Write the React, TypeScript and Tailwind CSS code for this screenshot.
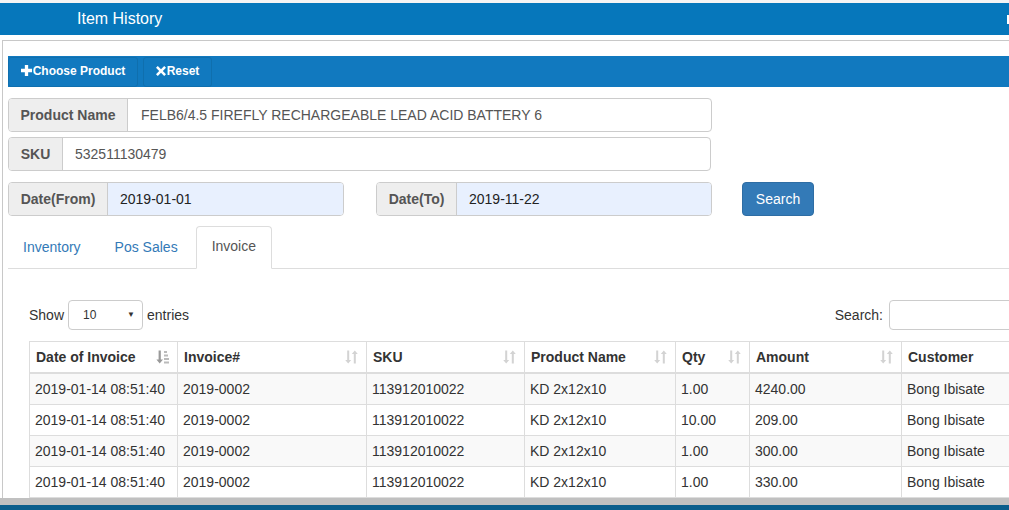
import React from "react";

const rows = [
  { date: "2019-01-14 08:51:40", inv: "2019-0002", sku: "113912010022", name: "KD 2x12x10", qty: "1.00", amount: "4240.00", customer: "Bong Ibisate" },
  { date: "2019-01-14 08:51:40", inv: "2019-0002", sku: "113912010022", name: "KD 2x12x10", qty: "10.00", amount: "209.00", customer: "Bong Ibisate" },
  { date: "2019-01-14 08:51:40", inv: "2019-0002", sku: "113912010022", name: "KD 2x12x10", qty: "1.00", amount: "300.00", customer: "Bong Ibisate" },
  { date: "2019-01-14 08:51:40", inv: "2019-0002", sku: "113912010022", name: "KD 2x12x10", qty: "1.00", amount: "330.00", customer: "Bong Ibisate" },
];

function SortIcon({ active }: { active?: boolean }) {
  if (active) {
    return (
      <svg width="13" height="14" viewBox="0 0 13 14" className="shrink-0">
        <path d="M2.6 0.5h2.2v9h2.2l-3.3 4-3.3-4h2.2z" fill="#999" />
        <rect x="8" y="1" width="3" height="2" fill="#bbb" />
        <rect x="8" y="4.5" width="4" height="2" fill="#bbb" />
        <rect x="8" y="8" width="5" height="2" fill="#bbb" />
        <rect x="8" y="11.5" width="5" height="2" fill="#bbb" />
      </svg>
    );
  }
  return (
    <svg width="13" height="14" viewBox="0 0 13 14" className="shrink-0">
      <path d="M2.2 0.5h2v9.5h2l-3 3.5-3-3.5h2z" fill="#d3d3d3" />
      <path d="M8.8 13.5h2V4h2l-3-3.5-3 3.5h2z" fill="#d3d3d3" />
    </svg>
  );
}

function Addon({ label, width }: { label: string; width: string }) {
  return (
    <div
      className={`${width} flex items-center justify-center border-r border-[#ccc] bg-[#eee] text-[14px] font-bold text-[#555]`}
    >
      {label}
    </div>
  );
}

export default function App() {
  const cols = [
    { label: "Date of Invoice", w: "w-[149px]", active: true },
    { label: "Invoice#", w: "w-[189px]" },
    { label: "SKU", w: "w-[158px]" },
    { label: "Product Name", w: "w-[151px]" },
    { label: "Qty", w: "w-[74px]" },
    { label: "Amount", w: "w-[152px]" },
    { label: "Customer", w: "w-[160px]", noSort: true },
  ];

  return (
    <div
      className="relative h-[510px] w-[1009px] overflow-hidden bg-white text-[14px] text-[#333]"
      style={{ fontFamily: '"Liberation Sans", Arial, sans-serif' }}
    >
      <div className="h-[3px] bg-[#f4f4f4]" />
      <div className="flex h-[32px] items-center bg-[#0677bb] pl-[77px] text-[16px] text-white">
        <span className="flex-1">Item History</span>
        <span className="mr-[-6px] h-[9px] w-[8px] bg-white" />
      </div>

      <div className="ml-[2px] mt-[5px] h-[460px] w-[1100px] border-l border-t border-[#c8c8c8] pl-[5px] pt-[15px]">
        {/* toolbar */}
        <div className="flex h-[31px] items-center gap-[5px] bg-[#1179bf]">
          <button className="flex h-[30px] w-[130px] items-center justify-center rounded-[3px] border border-[#0f6fae] pb-[2px] text-[12px] font-bold text-white">
            <svg width="11" height="11" viewBox="0 0 10 10" className="mr-[1px]">
              <path d="M3.5 0h3v3.5H10v3H6.5V10h-3V6.5H0v-3h3.5z" fill="#fff" />
            </svg>
            Choose Product
          </button>
          <button className="flex h-[30px] w-[69px] items-center justify-center rounded-[3px] border border-[#0f6fae] pb-[2px] text-[12px] font-bold text-white">
            <svg width="10" height="10" viewBox="0 0 10 10" className="mr-[1px]">
              <path d="M1.8 0L5 3.2 8.2 0 10 1.8 6.8 5 10 8.2 8.2 10 5 6.8 1.8 10 0 8.2 3.2 5 0 1.8z" fill="#fff" />
            </svg>
            Reset
          </button>
        </div>

        {/* product name */}
        <div className="mt-[11px] flex h-[34px] w-[704px] overflow-hidden rounded-[4px] border border-[#ccc]">
          <Addon label="Product Name" width="w-[119px]" />
          <div className="flex flex-1 items-center pl-[13px] text-[#555]">
            FELB6/4.5 FIREFLY RECHARGEABLE LEAD ACID BATTERY 6
          </div>
        </div>

        {/* sku */}
        <div className="mt-[5px] flex h-[34px] w-[703px] overflow-hidden rounded-[4px] border border-[#ccc]">
          <Addon label="SKU" width="w-[54px]" />
          <div className="flex flex-1 items-center pl-[12px] text-[#555]">532511130479</div>
        </div>

        {/* dates */}
        <div className="mt-[11px] flex h-[34px] items-center">
          <div className="flex h-[34px] w-[336px] overflow-hidden rounded-[4px] border border-[#ccc]">
            <Addon label="Date(From)" width="w-[99px]" />
            <div className="flex flex-1 items-center bg-[#e8f0fe] pl-[12px] text-[#222]">2019-01-01</div>
          </div>
          <div className="ml-[32px] flex h-[34px] w-[336px] overflow-hidden rounded-[4px] border border-[#ccc]">
            <Addon label="Date(To)" width="w-[80px]" />
            <div className="flex flex-1 items-center bg-[#e8f0fe] pl-[12px] text-[#222]">2019-11-22</div>
          </div>
          <button className="ml-[30px] h-[34px] w-[72px] rounded-[4px] border border-[#2e6da4] bg-[#337ab7] text-white">
            Search
          </button>
        </div>

        {/* tabs */}
        <div className="mt-[10px] flex h-[43px] w-[1010px] items-end border-b border-[#ddd]">
          <div className="mb-[-1px] flex h-[42px] items-center px-[15px] pb-[2px] text-[#337ab7]">Inventory</div>
          <div className="mb-[-1px] ml-[4px] flex h-[42px] items-center px-[15px] pb-[2px] text-[#337ab7]">Pos Sales</div>
          <div className="mb-[-1px] ml-[3px] flex h-[43px] items-center rounded-t-[4px] border border-b-white border-[#ddd] bg-white px-[15px] pb-[2px] text-[#555]">
            Invoice
          </div>
        </div>

        {/* show / search */}
        <div className="ml-[21px] mt-[31px] flex h-[30px] w-[1000px] items-center">
          <span>Show</span>
          <div className="ml-[4px] flex h-[30px] w-[75px] items-center rounded-[4px] border border-[#ccc] pl-[14px] pr-[7px] text-[12px]">
            <span className="flex-1">10</span>
            <span className="text-[8px] text-[#333]">▼</span>
          </div>
          <span className="ml-[4px]">entries</span>
          <span className="ml-auto text-[#333]">Search:</span>
          <div className="ml-[6px] h-[30px] w-[140px] rounded-[4px] border border-[#ccc]" />
        </div>

        {/* table */}
        <div className="ml-[21px] mt-[11px] w-[1040px]">
          <div className="flex h-[33px] border-b-2 border-t border-[#ddd]">
            {cols.map((c, i) => (
              <div
                key={c.label}
                className={`${c.w} flex items-center border-r border-[#ddd] pl-[6px] pr-[8px] font-bold ${i === 0 ? "border-l" : ""}`}
              >
                <span className="flex-1">{c.label}</span>
                {!c.noSort && <SortIcon active={c.active} />}
              </div>
            ))}
          </div>
          {rows.map((r, ri) => {
            const vals = [r.date, r.inv, r.sku, r.name, r.qty, r.amount, r.customer];
            return (
              <div
                key={ri}
                className={`flex h-[31px] border-b border-[#ddd] ${ri % 2 === 0 ? "bg-[#f9f9f9]" : "bg-white"}`}
              >
                {vals.map((v, i) => (
                  <div
                    key={i}
                    className={`${cols[i].w} flex items-center border-r border-[#ddd] pl-[5px] ${i === 0 ? "border-l" : ""}`}
                  >
                    {v}
                  </div>
                ))}
              </div>
            );
          })}
        </div>
      </div>

      <div className="absolute bottom-0 left-0 w-full">
        <div className="h-[7px] bg-[#c0c0c0]" />
        <div className="h-[5px] bg-[#0b5e8c]" />
      </div>
    </div>
  );
}
